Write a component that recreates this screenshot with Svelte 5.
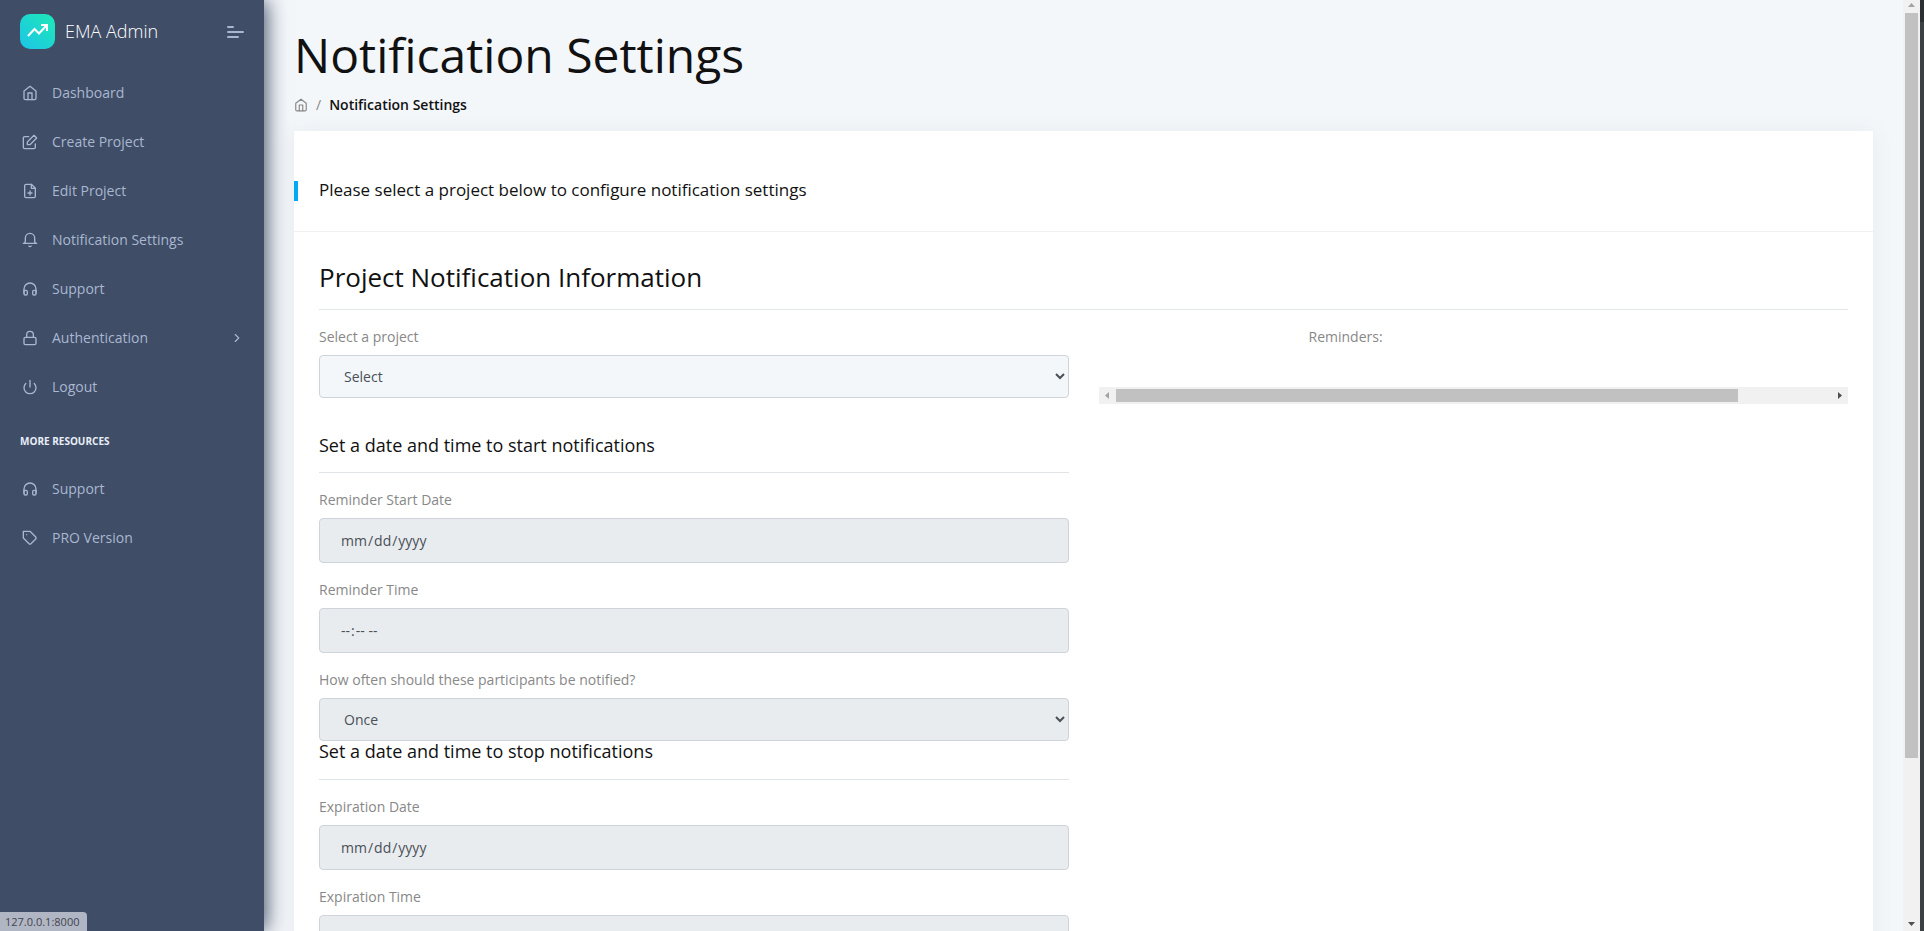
<script>
  const paths = {
    home: '<path d="M3 9l9-7 9 7v11a2 2 0 0 1-2 2H5a2 2 0 0 1-2-2z"/><path d="M9 22V12h6v10"/>',
    edit: '<path d="M20 14.700V20a2 2 0 0 1-2 2H4a2 2 0 0 1-2-2V6a2 2 0 0 1 2-2h6"/><path d="M18 2l4 4-10 10H8v-4z"/>',
    file: '<path d="M14 2H6a2 2 0 0 0-2 2v16a2 2 0 0 0 2 2h12a2 2 0 0 0 2-2V8z"/><path d="M14 2v6h6M12 18v-6M9 15h6"/>',
    bell: '<path d="M22 17H2a3 3 0 0 0 3-3V9a7 7 0 0 1 14 0v5a3 3 0 0 0 3 3z"/><path d="M13.730 21a2 2 0 0 1-3.460 0"/>',
    headphones: '<path d="M3 18v-6a9 9 0 0 1 18 0v6"/><path d="M21 19a2 2 0 0 1-2 2h-1a2 2 0 0 1-2-2v-3a2 2 0 0 1 2-2h3zM3 19a2 2 0 0 0 2 2h1a2 2 0 0 0 2-2v-3a2 2 0 0 0-2-2H3z"/>',
    lock: '<rect x="3" y="11" width="18" height="11" rx="2"/><path d="M7 11V7a5 5 0 0 1 10 0v4"/>',
    power: '<path d="M18.360 6.640a9 9 0 1 1-12.730 0M12 2v10"/>',
    tag: '<path d="M20.590 13.410l-7.170 7.170a2 2 0 0 1-2.830 0L2 12V2h10l8.590 8.590a2 2 0 0 1 0 2.820z"/><path d="M7 7h.01"/>'
  };

  const mainLinks = [
    { icon: 'home', text: 'Dashboard' },
    { icon: 'edit', text: 'Create Project' },
    { icon: 'file', text: 'Edit Project' },
    { icon: 'bell', text: 'Notification Settings' },
    { icon: 'headphones', text: 'Support' },
    { icon: 'lock', text: 'Authentication', more: true },
    { icon: 'power', text: 'Logout' }
  ];
  const moreLinks = [
    { icon: 'headphones', text: 'Support' },
    { icon: 'tag', text: 'PRO Version' }
  ];
</script>

{#snippet icon(name)}
  <svg class="icon" viewBox="0 0 24 24" aria-hidden="true">{@html paths[name]}</svg>
{/snippet}

{#snippet links(items)}
  <ul>
    {#each items as item}
      <li>
        <a href="#top">
          {@render icon(item.icon)}
          <span>{item.text}</span>
          {#if item.more}
            <svg class="icon chevron" viewBox="0 0 24 24" aria-hidden="true"><path d="M9 18l6-6-6-6" /></svg>
          {/if}
        </a>
      </li>
    {/each}
  </ul>
{/snippet}

<div class="shell">
  <nav class="sidebar">
    <div class="brand">
      <span class="logo">
        <svg viewBox="0 0 21 13" aria-hidden="true">
          <path d="M1 12l6.500-7 4.500 4.500L19 2" />
          <path class="head" d="M14 0h7v7h-2V3.500L17.500 2H14z" />
        </svg>
      </span>
      <span class="brand-name">EMA Admin</span>
      <button class="toggle" aria-label="Toggle menu"><i></i><i></i><i></i></button>
    </div>
    {@render links(mainLinks)}
    <h6>MORE RESOURCES</h6>
    {@render links(moreLinks)}
  </nav>

  <main>
    <h1>Notification Settings</h1>
    <div class="crumbs">
      <a href="#top" aria-label="Home">{@render icon('home')}</a>
      <span>/</span>
      <a class="current" href="#top">Notification Settings</a>
    </div>

    <section class="card">
      <header><h5>Please select a project below to configure notification settings</h5></header>
      <div class="body">
        <h3>Project Notification Information</h3>
        <div class="columns">
          <form>
            <div class="field">
              <label for="project">Select a project</label>
              <select id="project"><option>Select</option></select>
            </div>
            <h4 class="start">Set a date and time to start notifications</h4>
            <div class="field">
              <label for="start-date">Reminder Start Date</label>
              <input id="start-date" type="date" disabled />
            </div>
            <div class="field">
              <label for="start-time">Reminder Time</label>
              <input id="start-time" type="time" disabled />
            </div>
            <div class="field">
              <label for="often">How often should these participants be notified?</label>
              <select id="often" disabled><option>Once</option></select>
            </div>
            <h4>Set a date and time to stop notifications</h4>
            <div class="field">
              <label for="end-date">Expiration Date</label>
              <input id="end-date" type="date" disabled />
            </div>
            <div class="field">
              <label for="end-time">Expiration Time</label>
              <input id="end-time" type="time" disabled />
            </div>
          </form>
          <div class="reminders">
            <p>Reminders:</p>
            <div class="hbar" aria-hidden="true">
              <svg class="faded" viewBox="0 0 17 17"><path d="M10 5v7L6 8.500z" /></svg>
              <div class="track"><div class="thumb"></div></div>
              <svg viewBox="0 0 17 17"><path d="M7 5v7l4-3.500z" /></svg>
            </div>
          </div>
        </div>
      </div>
    </section>
  </main>

  <div class="vbar" aria-hidden="true">
    <svg class="faded" viewBox="0 0 17 13"><path d="M5 7h7L8.500 3z" /></svg>
    <div class="track"><div class="thumb"></div></div>
    <svg viewBox="0 0 17 13"><path d="M5 4h7L8.500 8z" /></svg>
  </div>
  <div class="edge"></div>
  <div class="status">127.0.0.1:8000</div>
</div>

<style>
  :global(body) {
    margin: 0;
    overflow: hidden;
  }
  .shell, .shell * {
    box-sizing: border-box;
  }
  .shell {
    display: grid;
    grid-template-columns: 264px minmax(0, 1fr) 17px 4px;
    height: 100vh;
    overflow: hidden;
    background: #f4f7fa;
    color: #888;
    font: 400 14px/21px "Open Sans", sans-serif;
  }
  a {
    color: inherit;
    text-decoration: none;
  }
  h1, h3, h4, h5, h6, p, ul {
    margin: 0;
    padding: 0;
    font-weight: 400;
  }
  h1, h3, h4, h5 {
    color: #111;
  }
  .icon {
    width: 16px;
    height: 16px;
    flex: none;
    fill: none;
    stroke: currentColor;
    stroke-width: 2;
    stroke-linecap: round;
    stroke-linejoin: round;
  }

  .sidebar {
    z-index: 1;
    background: #3f4d67;
    box-shadow: 2px 0 20px 0 #3f4d67;
    color: #a9b7d0;
  }
  .brand {
    display: flex;
    align-items: center;
    height: 63px;
    margin-bottom: 5px;
    padding: 0 20px;
  }
  .logo {
    display: grid;
    place-items: center;
    width: 35px;
    height: 35px;
    border-radius: 10px;
    background: linear-gradient(-135deg, #1de9b6 0%, #1dc4e9 100%);
  }
  .logo svg {
    width: 21px;
    height: 13px;
    margin-bottom: 2px;
    fill: none;
    stroke: #fff;
    stroke-width: 2;
  }
  .logo .head {
    fill: #fff;
    stroke: none;
  }
  .brand-name {
    flex: 1;
    margin-left: 10px;
    color: #fff;
    font-size: 18px;
    font-weight: 300;
  }
  .toggle {
    display: grid;
    gap: 3px;
    padding: 0;
    border: 0;
    background: none;
  }
  .toggle i {
    width: 17px;
    height: 2px;
    border-radius: 1px;
    background: #a9b7d0;
  }
  .toggle i:first-child {
    width: 7px;
  }
  .toggle i:last-child {
    width: 12px;
  }
  ul {
    list-style: none;
  }
  li a {
    display: flex;
    align-items: center;
    gap: 14px;
    height: 49px;
    padding: 0 20px 0 22px;
  }
  .chevron {
    width: 14px;
    height: 14px;
    margin-left: auto;
  }
  h6 {
    padding: 21px 20px 14px;
    color: #e8edf7;
    font-size: 10px;
    font-weight: 700;
    line-height: 18px;
  }

  main {
    padding: 24px 30px 0;
    overflow: hidden;
  }
  h1 {
    font-size: 48px;
    line-height: 62px;
  }
  .crumbs {
    display: flex;
    align-items: center;
    gap: 8px;
    height: 21px;
    margin: 8px 0 16px;
  }
  .crumbs a {
    display: flex;
  }
  .crumbs .icon {
    width: 14px;
    height: 14px;
  }
  .crumbs .current {
    color: #111;
    font-weight: 600;
  }
  .card {
    background: #fff;
    box-shadow: 0 1px 20px 0 rgba(69, 90, 100, 0.08);
  }
  header {
    padding: 50px 0 30px;
    border-bottom: 1px solid #f1f1f1;
  }
  h5 {
    padding: 0 0 2px 21px;
    border-left: 4px solid #04a9f5;
    font-size: 17px;
    line-height: 18px;
  }
  .body {
    padding: 25px;
  }
  h3 {
    padding: 1px 0 13px;
    border-bottom: 1px solid #e2e5e8;
    font-size: 26px;
    line-height: 38px;
  }
  .columns {
    display: grid;
    grid-template-columns: 1fr 1fr;
    gap: 30px;
    padding-top: 16px;
  }
  .field {
    margin-bottom: 16px;
  }
  label {
    display: block;
    margin-bottom: 8px;
  }
  h4 {
    margin: -16px 0 16px;
    padding-bottom: 18px;
    border-bottom: 1px solid #e2e5e8;
    font-size: 18px;
    line-height: 20px;
  }
  h4.start {
    margin-top: 37px;
    padding-bottom: 17px;
  }
  input, select {
    display: block;
    width: 100%;
    height: 45px;
    padding: 10px 20px;
    border: 1px solid #ced4da;
    border-radius: 4px;
    background-color: #f4f7fa;
    color: #495057;
    font: inherit;
    opacity: 1;
  }
  select {
    height: 43px;
  }
  input:disabled, select:disabled {
    background-color: #e9ecef;
    color: #495057;
    opacity: 1;
  }
  input::-webkit-calendar-picker-indicator {
    display: none;
  }
  .reminders p {
    padding: 0 0 40px 210px;
  }

  .hbar, .vbar {
    display: flex;
    background: #f1f1f1;
  }
  .hbar {
    height: 17px;
  }
  .hbar svg {
    width: 17px;
    height: 17px;
  }
  .vbar {
    flex-direction: column;
  }
  .vbar svg {
    width: 17px;
    height: 13px;
  }
  .hbar svg, .vbar svg {
    flex: none;
    fill: #505050;
  }
  .hbar .faded, .vbar .faded {
    fill: #a3a3a3;
  }
  .track {
    flex: 1;
  }
  .thumb {
    background: #c1c1c1;
  }
  .hbar .thumb {
    width: 87%;
    height: 13px;
    margin-top: 2px;
  }
  .vbar .thumb {
    width: 13px;
    height: 82.3%;
    margin-left: 2px;
  }
  .edge {
    background: linear-gradient(#2b2f31 22px, #3b4042 22px);
  }
  .status {
    position: absolute;
    z-index: 2;
    bottom: 0;
    left: 0;
    padding: 0 8px 0 5px;
    border-radius: 0 4px 0 0;
    background: #b1b6c4;
    color: #41454e;
    font-size: 11px;
    line-height: 19px;
  }
</style>
